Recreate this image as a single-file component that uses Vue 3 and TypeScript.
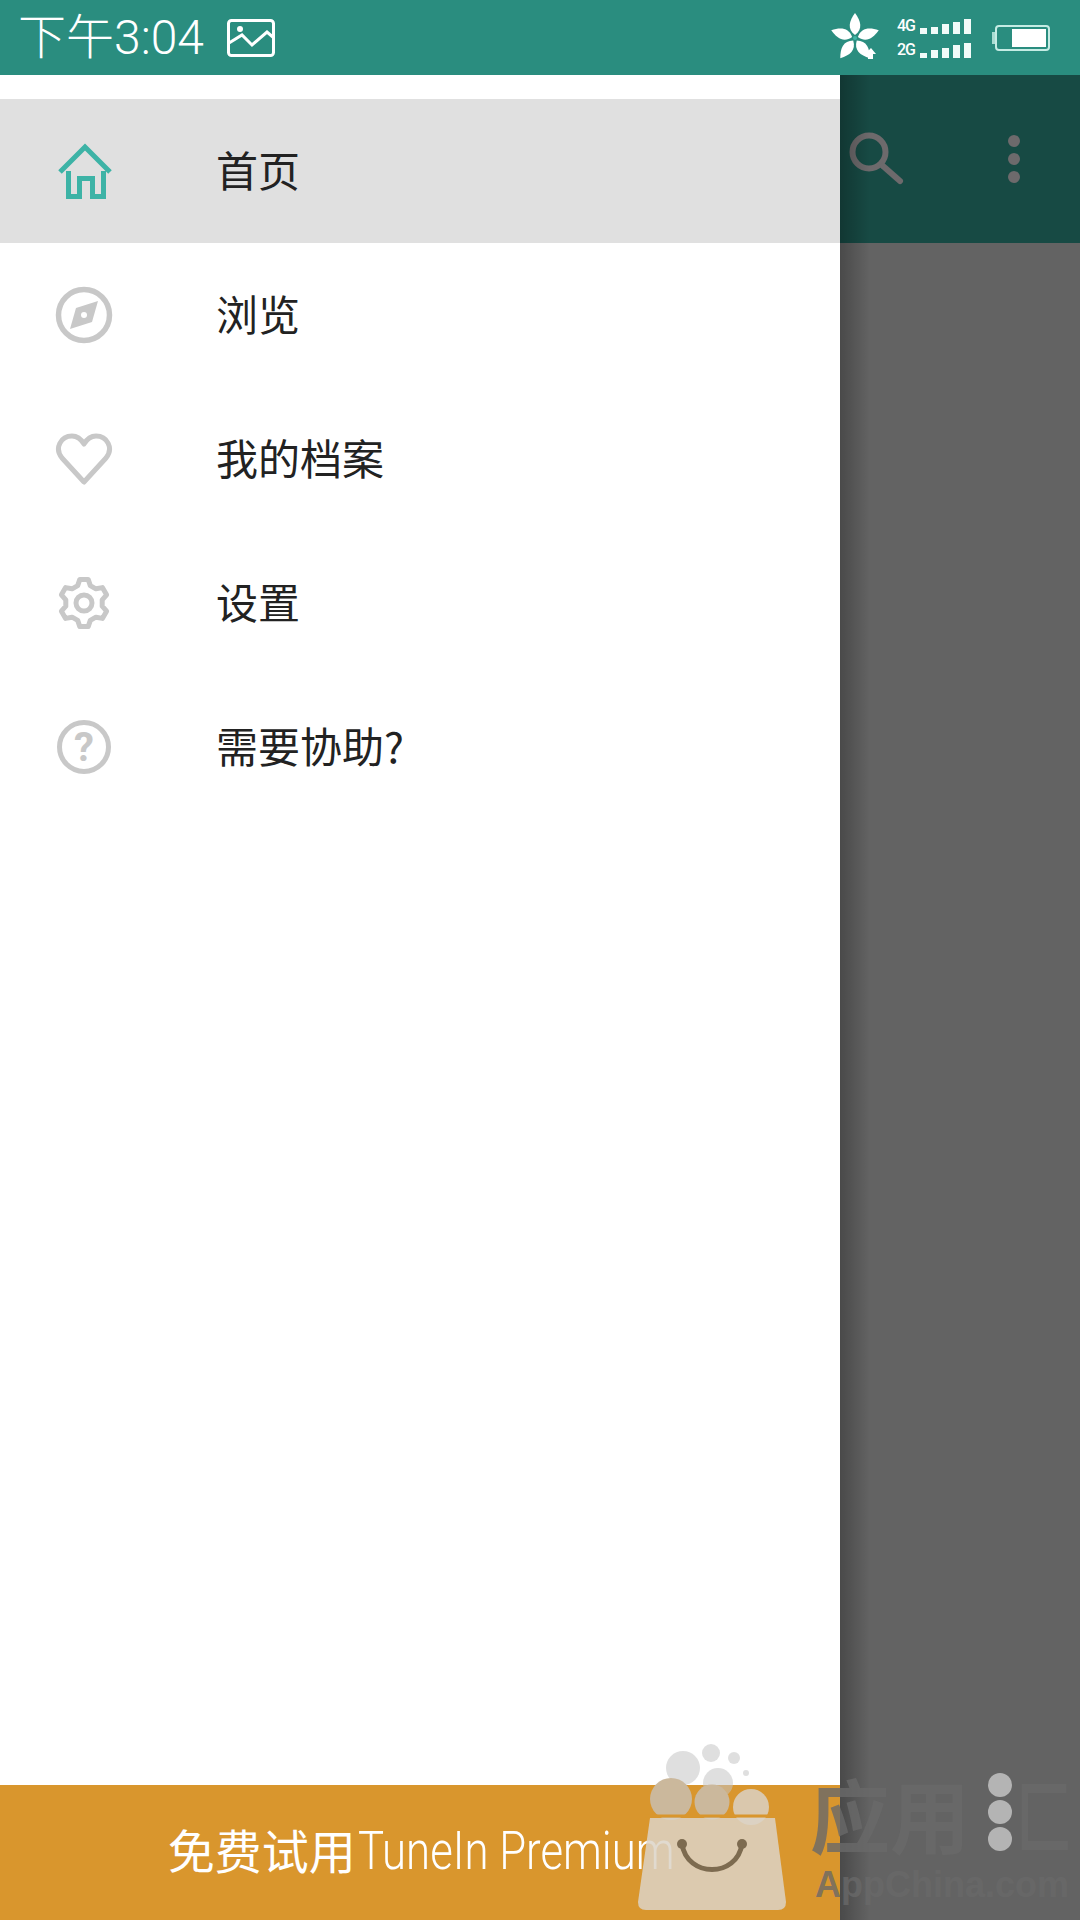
<script setup lang="ts">
const signalRows = [
  { label: '4G', heights: [6, 7, 10, 12, 15] },
  { label: '2G', heights: [5, 8, 10, 13, 15] },
];

const menuItems = [
  { id: 'home', label: '首页', active: true },
  { id: 'browse', label: '浏览', active: false },
  { id: 'profile', label: '我的档案', active: false },
  { id: 'settings', label: '设置', active: false },
  { id: 'help', label: '需要协助?', active: false },
];

const petals = [0, 72, 144, 216, 288];

// six teeth, first one pointing straight up
function gearPath(): string {
  const points: string[] = [];
  for (let i = 0; i < 6; i++) {
    const mid = (i * 60 - 90) * (Math.PI / 180);
    const corners: [number, number][] = [
      [18.5, -20],
      [24, -10],
      [24, 10],
      [18.5, 20],
    ];
    for (const [r, offset] of corners) {
      const a = mid + (offset * Math.PI) / 180;
      points.push(`${(30 + r * Math.cos(a)).toFixed(1)} ${(30 + r * Math.sin(a)).toFixed(1)}`);
    }
  }
  return `M${points.join('L')}Z`;
}
const gear = gearPath();
</script>

<template>
  <div class="screen">
    <header class="status-bar">
      <div class="status-left">
        <span class="clock">下午3:04</span>
        <svg class="picture-icon" width="50" height="40" viewBox="0 0 50 40">
          <rect x="2.5" y="2.5" width="45" height="35" rx="3" fill="none" stroke="#fff" stroke-width="3" />
          <circle cx="14" cy="11" r="3" fill="#fff" />
          <path d="M3 25L16 17L26 27L41 14L48 20" fill="none" stroke="#fff" stroke-width="3" />
        </svg>
      </div>
      <div class="status-right">
        <svg width="50" height="50" viewBox="0 0 50 50">
          <g fill="#fff">
            <path
              v-for="angle in petals"
              :key="angle"
              d="M25 22C17 16 19 8 25 0C31 8 33 16 25 22Z"
              :transform="`rotate(${angle} 25 25)`"
            />
            <path d="M38 46L38 41L35 41L41 35L46 41L43 41L43 46Z" />
          </g>
          <circle cx="25" cy="25" r="2" fill="#3fb5a5" />
        </svg>
        <div class="signal">
          <div v-for="row in signalRows" :key="row.label" class="signal-row">
            <span class="signal-label">{{ row.label }}</span>
            <i v-for="(h, i) in row.heights" :key="i" class="signal-bar" :style="{ height: h + 'px' }"></i>
          </div>
        </div>
        <div class="battery">
          <span class="battery-tip"></span>
          <span class="battery-body"><span class="battery-level"></span></span>
        </div>
      </div>
    </header>

    <div class="main">
      <nav class="drawer">
        <ul class="menu">
          <li v-for="item in menuItems" :key="item.id" class="menu-item" :class="{ active: item.active }">
            <svg class="menu-icon" width="60" height="60" viewBox="0 0 60 60">
              <g v-if="item.id === 'home'" fill="none" stroke="#3db3a6" stroke-width="5">
                <path d="M6 31L31 6L56 31" />
                <path d="M14.500 30V55.500H25.500V37.500H38.500V55.500H49.500V30" />
              </g>
              <g v-else-if="item.id === 'browse'">
                <circle cx="30" cy="30" r="25.500" fill="none" stroke="#c8c8c8" stroke-width="5.500" />
                <path d="M44 16L38 37L16 44L22 23Z" fill="#c8c8c8" />
                <circle cx="30" cy="30" r="3" fill="#fff" />
              </g>
              <path
                v-else-if="item.id === 'profile'"
                d="M30 53L8 29C0 19 7 7 18 7C24 7 27 10 30 15C33 10 36 7 42 7C53 7 60 19 52 29Z"
                fill="none"
                stroke="#c8c8c8"
                stroke-width="5"
                stroke-linejoin="round"
              />
              <g v-else-if="item.id === 'settings'" fill="none" stroke="#c8c8c8" stroke-width="5" stroke-linejoin="round">
                <path :d="gear" />
                <circle cx="30" cy="30" r="8" />
              </g>
              <g v-else>
                <circle cx="30" cy="30" r="24.500" fill="none" stroke="#c8c8c8" stroke-width="5" />
                <text x="30" y="44" text-anchor="middle" class="help-mark">?</text>
              </g>
            </svg>
            <span class="menu-label">{{ item.label }}</span>
          </li>
        </ul>
        <div class="premium">
          <span class="premium-lead">免费试用</span><span class="premium-name">TuneIn Premium</span>
        </div>
      </nav>

      <div class="behind">
        <div class="toolbar">
          <svg width="60" height="60" viewBox="0 0 60 60">
            <circle cx="24" cy="23" r="16.500" fill="none" stroke="#6d6a6c" stroke-width="6" />
            <path d="M38 37L55 52" fill="none" stroke="#6d6a6c" stroke-width="6" stroke-linecap="round" />
          </svg>
          <div class="more">
            <span></span>
            <span></span>
            <span></span>
          </div>
        </div>
        <div class="scrim"></div>
      </div>
    </div>

    <!-- appchina watermark sits over everything -->
    <div class="watermark">
      <svg class="wm-bag" width="170" height="185" viewBox="0 0 170 185">
        <g fill="#c4c4c4" fill-opacity="0.55">
          <circle cx="58" cy="33" r="17" />
          <circle cx="86" cy="18" r="9" />
          <circle cx="109" cy="23" r="6" />
          <circle cx="121" cy="38" r="3" />
          <circle cx="93" cy="48" r="15" />
        </g>
        <circle cx="46" cy="64" r="21" fill="#cbb89c" />
        <circle cx="87" cy="67" r="17.500" fill="#cbb89c" />
        <circle cx="126" cy="72" r="18" fill="#dac8ad" />
        <path d="M20 81H155" stroke="#d9962d" stroke-width="3" />
        <path d="M25 83H150L161 167Q161 175 153 175H21Q13 175 13 167Z" fill="#dcd3c7" fill-opacity="0.85" />
        <path d="M57 109C62 143 112 143 117 109" fill="none" stroke="#7d6b50" stroke-width="5" />
        <circle cx="57" cy="109" r="5" fill="#7d6b50" />
        <circle cx="117" cy="109" r="5" fill="#7d6b50" />
      </svg>
      <div class="wm-title">
        <span>应用</span>
        <div class="wm-dots">
          <span></span>
          <span></span>
          <span></span>
        </div>
        <span class="wm-last">匚</span>
      </div>
      <div class="wm-site">AppChina.com</div>
    </div>
  </div>
</template>

<style scoped>
.screen {
  position: relative;
  display: flex;
  flex-direction: column;
  width: 1080px;
  height: 1920px;
  overflow: hidden;
  font-family: "Noto Sans CJK SC", Roboto, sans-serif;
}

.status-bar {
  display: flex;
  align-items: center;
  justify-content: space-between;
  height: 75px;
  padding: 0 30px 0 18px;
  box-sizing: border-box;
  background: #2a8d7f;
  flex-shrink: 0;
}

.status-left {
  display: flex;
  align-items: center;
  gap: 22px;
}

.clock {
  font-family: Roboto, "Noto Sans CJK SC", sans-serif;
  font-size: 48px;
  font-weight: 300;
  color: #fff;
  line-height: 1;
}

.picture-icon {
  margin-top: 1px;
}

.status-right {
  display: flex;
  align-items: center;
  gap: 17px;
}

.signal {
  display: flex;
  flex-direction: column;
  gap: 8px;
}

.signal-row {
  display: flex;
  align-items: flex-end;
  gap: 4px;
  height: 16px;
}

.signal-label {
  width: 18px;
  margin-right: 1px;
  font-family: Roboto, sans-serif;
  font-size: 16px;
  font-weight: 500;
  letter-spacing: -1px;
  line-height: 16px;
  color: #fff;
}

.signal-bar {
  display: block;
  width: 7px;
  background: #f2fbf9;
}

.battery {
  display: flex;
  align-items: center;
  margin-left: 4px;
}

.battery-tip {
  width: 3px;
  height: 12px;
  background: #a9dcd2;
}

.battery-body {
  display: flex;
  justify-content: flex-end;
  width: 55px;
  height: 26px;
  padding: 2px;
  box-sizing: border-box;
  border: 2px solid #c5ece4;
  border-radius: 4px;
}

.battery-level {
  width: 34px;
  background: #fff;
}

.main {
  display: flex;
  flex: 1;
  min-height: 0;
}

.drawer {
  display: flex;
  flex-direction: column;
  width: 840px;
  background: #fff;
  flex-shrink: 0;
}

.menu {
  flex: 1;
  margin: 0;
  padding: 24px 0 0;
  list-style: none;
}

.menu-item {
  display: flex;
  align-items: center;
  gap: 102px;
  height: 144px;
  padding-left: 54px;
}

.menu-item.active {
  background: #e0e0e0;
}

.menu-label {
  margin-top: -5px;
  font-size: 42px;
  color: #222;
}

.help-mark {
  font-family: Roboto, sans-serif;
  font-size: 40px;
  font-weight: 700;
  fill: #c8c8c8;
}

.premium {
  display: flex;
  align-items: center;
  justify-content: center;
  height: 135px;
  padding-bottom: 4px;
  box-sizing: border-box;
  background: #d9962d;
  color: #fff;
  font-size: 47px;
  flex-shrink: 0;
}

.premium-lead {
  margin: -4px 2px 0 0;
}

.premium-name {
  display: inline-block;
  font-family: Roboto, sans-serif;
  font-size: 54px;
  font-weight: 300;
  transform: scaleX(0.81);
  transform-origin: left center;
  margin-right: -76px;
}

.behind {
  position: relative;
  display: flex;
  flex-direction: column;
  flex: 1;
}

.behind::after {
  content: "";
  position: absolute;
  top: 0;
  bottom: 0;
  left: 0;
  width: 30px;
  background: linear-gradient(to right, rgba(0, 0, 0, 0.26), rgba(0, 0, 0, 0));
}

.toolbar {
  display: flex;
  align-items: center;
  justify-content: space-between;
  height: 168px;
  padding: 0 60px 0 5px;
  box-sizing: border-box;
  background: #174a44;
}

.more {
  display: flex;
  flex-direction: column;
  gap: 6px;
}

.more span {
  width: 12px;
  height: 12px;
  border-radius: 50%;
  background: #6d6a6c;
}

.scrim {
  flex: 1;
  background: #636363;
}

.watermark {
  position: absolute;
  right: 0;
  bottom: 0;
  width: 460px;
  height: 190px;
  pointer-events: none;
}

.wm-bag {
  position: absolute;
  left: 5px;
  top: 5px;
}

.wm-title {
  position: absolute;
  left: 190px;
  top: 32px;
  display: flex;
  align-items: center;
  white-space: nowrap;
  font-size: 80px;
  font-weight: 700;
  line-height: 100px;
  color: rgba(105, 105, 105, 0.8);
}

.wm-dots {
  display: flex;
  flex-direction: column;
  gap: 3px;
  margin: 0 4px 0 18px;
}

.wm-dots span {
  width: 24px;
  height: 24px;
  border-radius: 50%;
  background: #b4b4b4;
}

.wm-last {
  display: inline-block;
  transform: scaleX(0.7);
  transform-origin: left center;
  margin-right: -24px;
}

.wm-site {
  position: absolute;
  left: 195px;
  top: 133px;
  white-space: nowrap;
  font-family: "Liberation Sans", sans-serif;
  font-size: 36px;
  font-weight: 700;
  line-height: 44px;
  color: rgba(105, 105, 105, 0.8);
}
</style>
